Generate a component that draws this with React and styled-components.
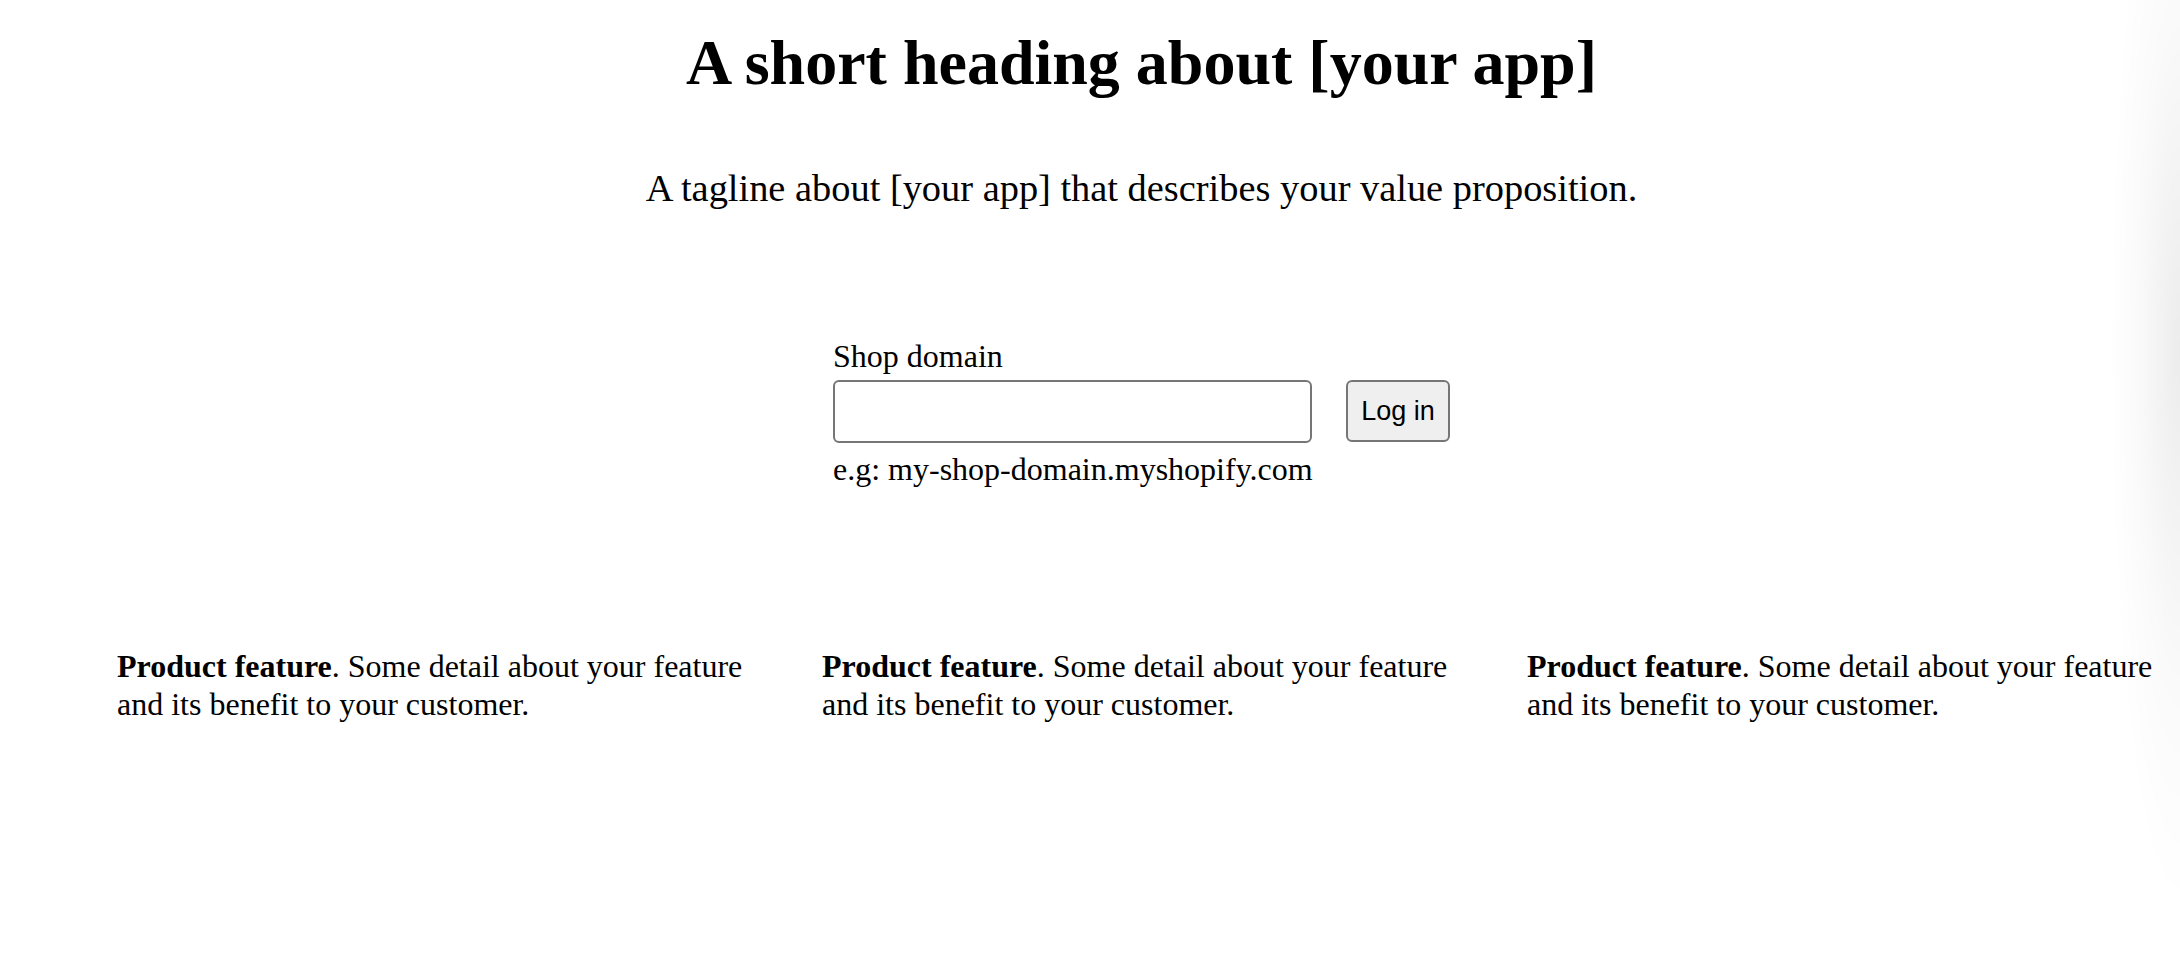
import React from "react";
import styled, { createGlobalStyle } from "styled-components";

// Page is drawn at twice the usual css size, and runs a bit wider than the window
const GlobalStyle = createGlobalStyle`
  html, body {
    margin: 0;
    padding: 0;
    background: #ffffff;
    overflow: hidden;
  }
  body {
    font-family: "Liberation Serif", "Times New Roman", serif;
    color: #000000;
  }
`;

const Page = styled.div`
  width: 2283px;
  min-height: 980px;
  padding-top: 27px;
  box-sizing: border-box;
`;

const Hero = styled.header`
  display: flex;
  flex-direction: column;
  align-items: center;
`;

const Heading = styled.h1`
  margin: 0;
  font-size: 64px;
  line-height: 72px;
  font-weight: 700;
`;

const Tagline = styled.p`
  margin: 67px 0 0;
  font-size: 38.4px;
  line-height: 44px;
`;

const LoginForm = styled.form`
  margin: 128px auto 0;
  width: 617px;
  display: flex;
  flex-direction: column;
`;

const Label = styled.label`
  font-size: 32px;
  line-height: 37px;
`;

const FieldRow = styled.div`
  display: flex;
  align-items: flex-start;
  gap: 34px;
  margin-top: 5px;
`;

const DomainInput = styled.input`
  width: 479px;
  height: 63px;
  box-sizing: border-box;
  border: 2px solid #767676;
  border-radius: 6px;
  background: #ffffff;
  padding: 2px 4px;
  font-size: 26px;
  outline: none;
`;

const LoginButton = styled.button`
  width: 104px;
  height: 62px;
  box-sizing: border-box;
  border: 2px solid #767676;
  border-radius: 6px;
  background: #efefef;
  color: #000000;
  font-family: "Liberation Sans", Arial, sans-serif;
  font-size: 27px;
  padding: 0;
`;

const Hint = styled.span`
  margin-top: 8px;
  font-size: 32px;
  line-height: 37px;
`;

const Features = styled.ul`
  list-style: none;
  margin: 159px 0 0;
  padding: 0 0 0 117px;
  display: grid;
  grid-template-columns: repeat(3, 650px);
  column-gap: 55px;
`;

const Feature = styled.li`
  font-size: 32px;
  line-height: 38px;
`;

// faint shadow creeping in from the right edge of the window
const EdgeShade = styled.div`
  position: fixed;
  top: 0;
  right: 0;
  width: 90px;
  height: 980px;
  pointer-events: none;
  background: radial-gradient(
    70px 560px at 100% 350px,
    rgba(0, 0, 0, 0.075),
    rgba(0, 0, 0, 0.02) 60%,
    rgba(0, 0, 0, 0) 100%
  );
`;

const features = [1, 2, 3];

const App = () => {
  return (
    <>
      <GlobalStyle />
      <Page>
        <Hero>
          <Heading>A short heading about [your app]</Heading>
          <Tagline>
            A tagline about [your app] that describes your value proposition.
          </Tagline>
        </Hero>
        <LoginForm onSubmit={(e) => e.preventDefault()}>
          <Label htmlFor="shop">Shop domain</Label>
          <FieldRow>
            <DomainInput id="shop" type="text" name="shop" />
            <LoginButton type="submit">Log in</LoginButton>
          </FieldRow>
          <Hint>e.g: my-shop-domain.myshopify.com</Hint>
        </LoginForm>
        <Features>
          {features.map((n) => (
            <Feature key={n}>
              <strong>Product feature</strong>. Some detail about your feature
              and its benefit to your customer.
            </Feature>
          ))}
        </Features>
      </Page>
      <EdgeShade />
    </>
  );
};

export default App;
